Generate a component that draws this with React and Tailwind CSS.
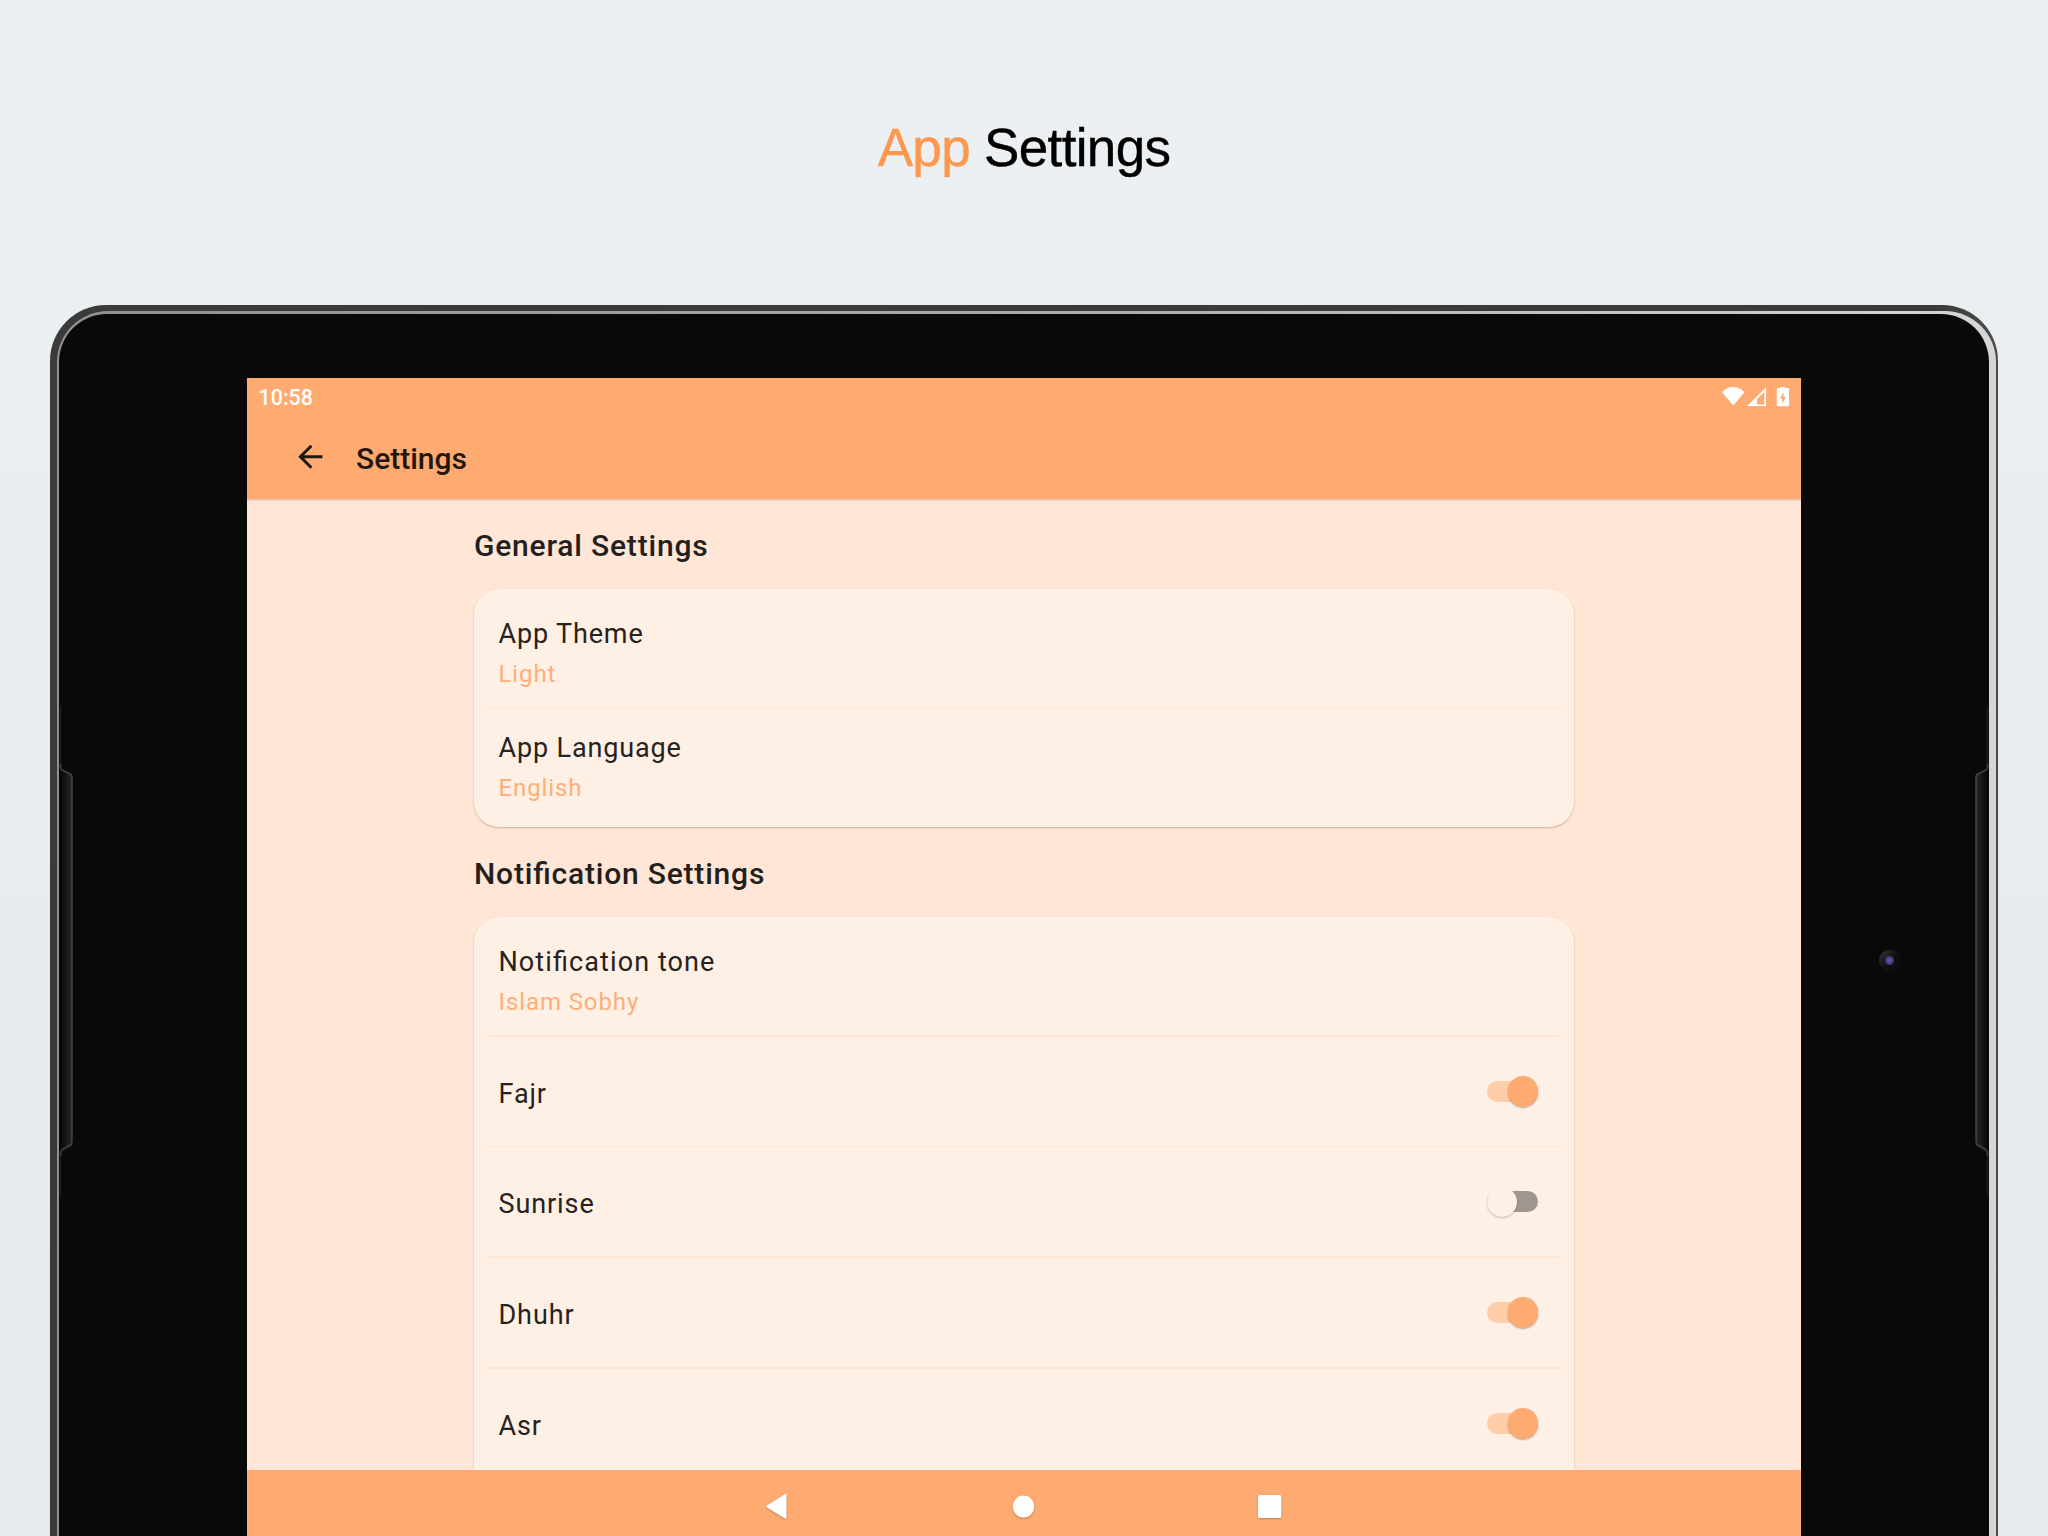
function Toggle({ on }) {
  return (
    <div className="relative flex h-[30px] w-[51.5px] items-center">
      <div className={on ? "h-[21px] w-full rounded-full bg-[#ffcda8]" : "h-[21px] w-full rounded-full bg-[#9f9690]"} />
      <div
        className={
          on
            ? "absolute right-0 top-0 size-[30.5px] rounded-full bg-[#ffaa71] shadow-[0_1px_2px_rgba(0,0,0,0.3)]"
            : "absolute left-0 top-0 size-[30.5px] rounded-full bg-[#fff0e5] shadow-[0_1px_2px_rgba(0,0,0,0.25)]"
        }
      />
    </div>
  );
}

function Heading({ children }) {
  return <h2 className="text-[30px] leading-[36px] font-medium tracking-[0.8px] text-[#231f1c]">{children}</h2>;
}

function ValueRow({ title, value, spacing = "tracking-[0.85px]" }) {
  return (
    <div className="flex h-[112.5px] flex-col pl-[24.5px] pt-[21.5px]">
      <div className={"text-[27px] leading-[36px] text-[#262220] " + spacing}>{title}</div>
      <div className="mt-[6px] text-[24px] leading-[32px] tracking-[0.9px] text-[#ffae78]">{value}</div>
    </div>
  );
}

function Divider() {
  return <div className="mx-[12px] h-[1.5px] shrink-0 bg-[#ffe6d6]" />;
}

function SwitchRow({ title, on }) {
  return (
    <div className="flex h-[109.2px] shrink-0 items-center justify-between pl-[24.5px] pr-[35.5px]">
      <div className="pt-[5px] text-[27px] leading-[36px] tracking-[0.9px] text-[#262220]">{title}</div>
      <Toggle on={on} />
    </div>
  );
}

const CARD = "rounded-[25px] bg-[#fff0e5] pt-[5.5px] pb-[6.5px] shadow-[0_1px_2px_rgba(120,70,40,0.35)]";

function StatusIcons() {
  return (
    <svg className="h-[24px] w-[72px]" viewBox="0 0 72 24" fill="#fff">
      <path d="M12.200 21.500 1 8.200Q5.700 3 12.200 3T23.400 8.200Z" />
      <path fillRule="evenodd" d="M26 22 45 3.500V22ZM36 20.500H43.300V8L36 15Z" />
      <path fillRule="evenodd" d="M59.300 4V3h4.600v1h3q1.200 0 1.200 1.200V21q0 1.200-1.200 1.200H57Q55.800 22.200 55.800 21V5.200Q55.800 4 57 4ZM62.600 8 59 14.500h2.300v5L64.900 13h-2.300Z" />
    </svg>
  );
}

function Grip({ flip }) {
  return (
    <svg
      className={flip ? "absolute right-0 top-[382px] h-[600px] w-[18px] -scale-x-100" : "absolute left-0 top-[382px] h-[600px] w-[18px]"}
      viewBox="0 0 18 600"
    >
      <defs>
        <linearGradient id={flip ? "gripR" : "gripL"} x1="0" x2="1" y1="0" y2="0">
          <stop offset="0" stopColor="#080808" />
          <stop offset="0.5" stopColor="#171717" />
          <stop offset="1" stopColor="#272727" />
        </linearGradient>
      </defs>
      <path d="M1.500 72 13 79V450L1.500 458Z" fill={flip ? "url(#gripR)" : "url(#gripL)"} />
      <path d="M1.500 10V72M1.500 459V500" fill="none" stroke="#222" strokeWidth="1.300" />
      <path
        d="M1.500 68V72Q2 73.500 4 74.500L10.500 77.500Q13 78.500 13 81V446Q13 448 11 449L4 453Q1.500 454.500 1.500 457V460"
        fill="none"
        stroke="#4a4a4a"
        strokeOpacity="0.85"
        strokeWidth="1.500"
      />
    </svg>
  );
}

export default function App() {
  return (
    <div className="flex h-[1536px] w-[2048px] flex-col items-center overflow-hidden bg-linear-to-b from-[#ecf0f3] via-[#e7edef] to-[#e4eaed] font-['Roboto',sans-serif]">
      <h1 className="h-[305px] shrink-0 pt-[116px] font-['Liberation_Sans',Arial,sans-serif] text-[53px] leading-[64px] tracking-[-0.65px] text-black [-webkit-text-stroke:0.4px_currentColor]">
        <span className="text-[#ff974f]">App</span> Settings
      </h1>

      <div className="h-[1300px] w-[1948px] shrink-0 overflow-hidden rounded-t-[56px] bg-linear-to-r from-[#3a3a3a] from-97% via-[#3a3a3a] to-[#4c4c4c] pl-[6.5px] pr-[2px] pt-[5.5px]">
        <div className="h-full overflow-hidden rounded-t-[51px] bg-linear-to-r from-[#909090] via-[#aaa] to-[#d6d6d6] pl-[2px] pr-[7px] pt-[3px]">
          <div className="relative flex h-full overflow-hidden rounded-t-[48px] bg-[#090909] pl-[188px]">
            <Grip />
            <Grip flip />
            <div className="absolute left-[1820px] top-[636px] flex size-[22px] items-center justify-center rounded-full bg-linear-to-br from-[#3c3c3c] via-[#101010] to-[#0a0a0a]">
              <div className="size-[9px] rounded-full bg-radial from-[#6260a8] to-[#22254e]" />
            </div>

            <div className="mt-[64px] flex h-[1158px] w-[1554.5px] shrink-0 flex-col bg-[#ffe6d6]">
              <header className="relative z-10 h-[121px] shrink-0 bg-[#ffaa71] shadow-[0_1px_2px_rgba(120,70,40,0.3)]">
                <div className="flex h-[36px] items-center justify-between pl-[12px] pr-[8px]">
                  <span className="pt-[4.5px] text-[21.5px] font-medium text-white">10:58</span>
                  <StatusIcons />
                </div>
                <div className="flex h-[85px] items-center pl-[48.5px] pt-[4px]">
                  <svg className="size-[30px]" viewBox="0 0 30 30" fill="none" stroke="#1f1710" strokeWidth="3">
                    <path d="M27.400 13.800H5.400M16.400 2.800 5.400 13.800 16.400 24.800" />
                  </svg>
                  <span className="ml-[31px] mt-px text-[30px] leading-[36px] font-medium text-[#1f1710]">Settings</span>
                </div>
              </header>

              <main className="flex h-[971.5px] shrink-0 flex-col overflow-hidden px-[227.5px] [font-feature-settings:'liga'_1]">
                <div className="h-[90px] shrink-0 pt-[29.5px]">
                  <Heading>General Settings</Heading>
                </div>
                <section className={CARD}>
                  <ValueRow title="App Theme" value="Light" />
                  <Divider />
                  <ValueRow title="App Language" value="English" />
                </section>
                <div className="h-[90px] shrink-0 pt-[29px]">
                  <Heading>Notification Settings</Heading>
                </div>
                <section className={CARD + " h-[800px] shrink-0"}>
                  <ValueRow title="Notification tone" value="Islam Sobhy" spacing="tracking-[1.1px]" />
                  <Divider />
                  <SwitchRow title="Fajr" on />
                  <Divider />
                  <SwitchRow title="Sunrise" />
                  <Divider />
                  <SwitchRow title="Dhuhr" on />
                  <Divider />
                  <SwitchRow title="Asr" on />
                </section>
              </main>

              <nav className="flex h-[66px] shrink-0 items-start justify-center bg-[#ffaa71] pt-[22.5px]">
                <svg className="h-[30px] w-[520px]" viewBox="0 0 520 30" fill="#fff">
                  <g className="drop-shadow-[0_1px_1px_rgba(0,0,0,0.25)]">
                    <path d="M3 12.500 20.500 1.200Q22.500 0 22.500 2V24Q22.500 26.500 20.500 25.200L3 14.500Q1.300 13.500 3 12.500Z" />
                    <ellipse cx="259.500" cy="13.500" rx="10.700" ry="11" />
                    <rect x="494" y="2" width="23.300" height="23" rx="1.500" />
                  </g>
                </svg>
              </nav>
            </div>
          </div>
        </div>
      </div>
    </div>
  );
}
